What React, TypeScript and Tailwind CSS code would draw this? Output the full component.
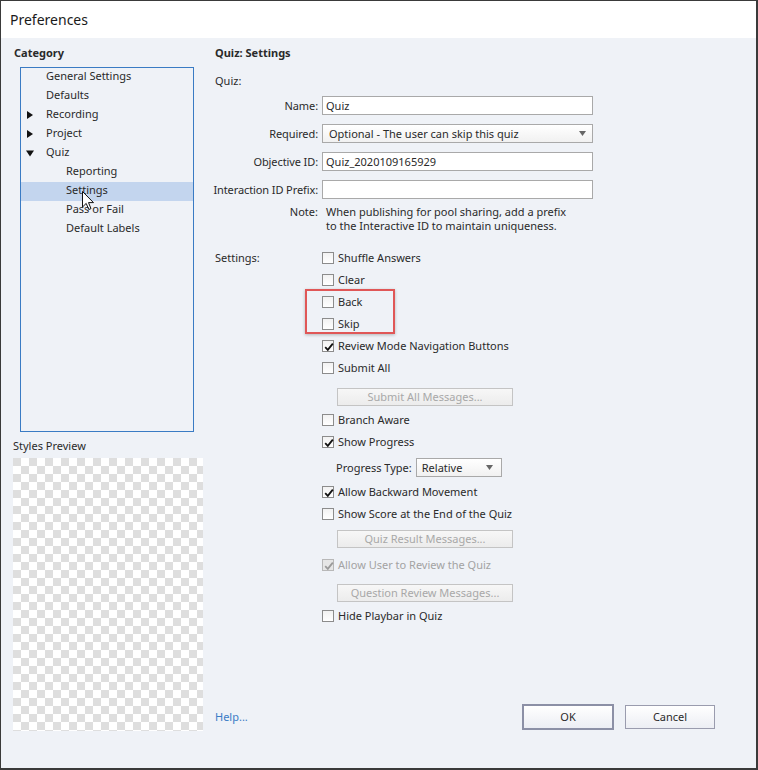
import React from 'react';

const font = { fontFamily: '"Noto Sans", "Open Sans", sans-serif' };

const Check = ({ disabled }: { disabled?: boolean }) => (
    <svg width="10" height="10" viewBox="0 0 10 10" className="absolute left-[1px] top-[1px]">
        <path d="M1.2 5.2 L3.8 7.8 L8.8 1.6" fill="none" stroke={disabled ? '#9a9a9a' : '#111'} strokeWidth="1.8" />
    </svg>
);

const CheckRow = ({ label, checked, disabled }: { label: string; checked?: boolean; disabled?: boolean }) => (
    <div className="h-[22px] flex items-center gap-[4px]">
        <div className={`relative w-[12px] h-[12px] border ${disabled ? 'border-[#b8b8b8] bg-[#e6e6e6]' : 'border-[#8c8c8c] bg-gradient-to-b from-[#f2f2f2] to-white'}`}>
            {checked && <Check disabled={disabled} />}
        </div>
        <span className={`-mt-[1px] ${disabled ? 'text-[#a3a3a3]' : 'text-[#2a2a2a]'}`}>{label}</span>
    </div>
);

const DisabledButton = ({ label }: { label: string }) => (
    <div className="ml-[15px] w-[176px] h-[18px] border border-[#c4c4c4] bg-gradient-to-b from-[#f7f7f7] to-[#ececec] flex items-center justify-center text-[#a8a8a8]">
        {label}
    </div>
);

const Arrow = () => (
    <svg width="7" height="5" viewBox="0 0 7 5">
        <path d="M0 0 H7 L3.5 5 Z" fill="#666" />
    </svg>
);

const FormRow = ({ label, children, className = '' }: { label: string; children: React.ReactNode; className?: string }) => (
    <div className={`flex items-center ${className}`}>
        <div className="w-[104px] shrink-0 flex justify-end pr-[1px]">
            <span className="whitespace-nowrap text-[#2a2a2a] tracking-[-0.1px]">{label}</span>
        </div>
        <div className="ml-[3px]">{children}</div>
    </div>
);

const TreeRow = ({ label, indent, toggle, selected }: { label: string; indent: number; toggle?: 'open' | 'closed'; selected?: boolean }) => (
    <div className={`relative h-[19px] flex items-center ${selected ? 'bg-[#c3d5ee]' : ''}`}>
        {toggle && (
            <svg width="8" height="8" viewBox="0 0 8 8" className="absolute left-[5px] top-[5px]">
                {toggle === 'closed' ? <path d="M1 0 L7 4 L1 8 Z" fill="#111" /> : <path d="M0 1.5 H8 L4 7.5 Z" fill="#111" />}
            </svg>
        )}
        <span className={`-mt-[3px] ${indent === 2 ? 'pl-[45px]' : 'pl-[25px]'}`}>{label}</span>
        {selected && (
            <svg width="13" height="20" viewBox="0 0 13 20" className="absolute left-[61px] top-[9px]">
                <path d="M0.5 0.5 L0.5 16 L4.2 12.4 L6.8 18.5 L9 17.6 L6.5 11.6 L11.5 11.6 Z" fill="white" stroke="#111" strokeWidth="1" strokeLinejoin="round" />
            </svg>
        )}
    </div>
);

export default function App() {
    return (
        <div className="w-[758px] h-[770px] flex flex-col border-l border-t border-r-2 border-b-2 border-[#3a3a3a] text-[11px] leading-[16px] text-[#2a2a2a]" style={font}>
            <div className="h-[37px] bg-white flex items-center pl-[9px] pt-[1px] text-[14px] text-[#1a1a1a]">Preferences</div>
            <div className="flex-1 bg-[#eff2f7] flex">
                {/* left: category tree + preview */}
                <div className="w-[202px] pl-[12px] pt-[7px] flex flex-col">
                    <div className="font-bold pl-[1px]">Category</div>
                    <div className="mt-[6px] ml-[7px] w-[174px] h-[365px] border border-[#3a7bc4]">
                        <TreeRow label="General Settings" indent={1} />
                        <TreeRow label="Defaults" indent={1} />
                        <TreeRow label="Recording" indent={1} toggle="closed" />
                        <TreeRow label="Project" indent={1} toggle="closed" />
                        <TreeRow label="Quiz" indent={1} toggle="open" />
                        <TreeRow label="Reporting" indent={2} />
                        <TreeRow label="Settings" indent={2} selected />
                        <TreeRow label="Pass or Fail" indent={2} />
                        <TreeRow label="Default Labels" indent={2} />
                    </div>
                    <div className="mt-[6px]">Styles Preview</div>
                    <div className="mt-[4px] w-[190px] h-[273px] bg-[repeating-conic-gradient(#ffffff_0_25%,#dedede_0_50%)] bg-[length:16px_16px]" />
                </div>

                {/* right: quiz settings */}
                <div className="flex-1 pl-[12px] pt-[7px] flex flex-col">
                    <div className="font-bold">Quiz: Settings</div>
                    <div className="mt-[12px]">Quiz:</div>

                    <FormRow label="Name:" className="mt-[7px]">
                        <div className="w-[271px] h-[19px] border border-[#a9a9a9] bg-white flex items-center pl-[3px]">Quiz</div>
                    </FormRow>
                    <FormRow label="Required:" className="mt-[9px]">
                        <div className="w-[271px] h-[19px] border border-[#a9a9a9] bg-gradient-to-b from-white to-[#f1f1f1] flex items-center justify-between pl-[6px] pr-[6px]">
                            <span>Optional - The user can skip this quiz</span>
                            <Arrow />
                        </div>
                    </FormRow>
                    <FormRow label="Objective ID:" className="mt-[9px]">
                        <div className="w-[271px] h-[19px] border border-[#a9a9a9] bg-white flex items-center pl-[3px]">Quiz_2020109165929</div>
                    </FormRow>
                    <FormRow label="Interaction ID Prefix:" className="mt-[9px]">
                        <div className="w-[271px] h-[19px] border border-[#a9a9a9] bg-white" />
                    </FormRow>
                    <div className="flex mt-[6px] leading-[14px]">
                        <span className="w-[104px] text-right pr-[1px]">Note:</span>
                        <span className="ml-[7px]">
                            When publishing for pool sharing, add a prefix
                            <br />
                            to the Interactive ID to maintain uniqueness.
                        </span>
                    </div>

                    <div className="flex mt-[14px]">
                        <div className="w-[107px] h-[22px] flex items-center">Settings:</div>
                        <div className="flex flex-col">
                            <CheckRow label="Shuffle Answers" />
                            <CheckRow label="Clear" />
                            <div className="relative">
                                <div className="absolute left-[-17px] top-[-2px] w-[90px] h-[45px] border-2 border-[#e05757] shadow-[0_1px_3px_rgba(0,0,0,0.25)]" />
                                <CheckRow label="Back" />
                                <CheckRow label="Skip" />
                            </div>
                            <CheckRow label="Review Mode Navigation Buttons" checked />
                            <CheckRow label="Submit All" />
                            <div className="mt-[9px]">
                                <DisabledButton label="Submit All Messages..." />
                            </div>
                            <div className="mt-[3px]">
                                <CheckRow label="Branch Aware" />
                            </div>
                            <CheckRow label="Show Progress" checked />
                            <div className="mt-[5px] flex items-center pl-[14px]">
                                <span>Progress Type:</span>
                                <div className="ml-[4px] w-[86px] h-[19px] border border-[#a9a9a9] bg-gradient-to-b from-white to-[#f1f1f1] flex items-center justify-between pl-[5px] pr-[8px]">
                                    <span>Relative</span>
                                    <Arrow />
                                </div>
                            </div>
                            <div className="mt-[4px]">
                                <CheckRow label="Allow Backward Movement" checked />
                            </div>
                            <CheckRow label="Show Score at the End of the Quiz" />
                            <div className="mt-[5px]">
                                <DisabledButton label="Quiz Result Messages..." />
                            </div>
                            <div className="mt-[6px]">
                                <CheckRow label="Allow User to Review the Quiz" checked disabled />
                            </div>
                            <div className="mt-[8px]">
                                <DisabledButton label="Question Review Messages..." />
                            </div>
                            <div className="mt-[3px]">
                                <CheckRow label="Hide Playbar in Quiz" />
                            </div>
                        </div>
                    </div>

                    <div className="mt-auto mb-[38px] flex items-center pr-[41px]">
                        <span className="text-[#3b7cc6]">Help...</span>
                        <div className="ml-auto flex gap-[11px]">
                            <div className="w-[92px] h-[26px] border-2 border-[#8c90a6] bg-gradient-to-b from-white to-[#eceef4] flex items-center justify-center">OK</div>
                            <div className="w-[90px] h-[24px] mt-[1px] border border-[#9a9cae] bg-gradient-to-b from-white to-[#eceef4] flex items-center justify-center">Cancel</div>
                        </div>
                    </div>
                </div>
            </div>
        </div>
    );
}
